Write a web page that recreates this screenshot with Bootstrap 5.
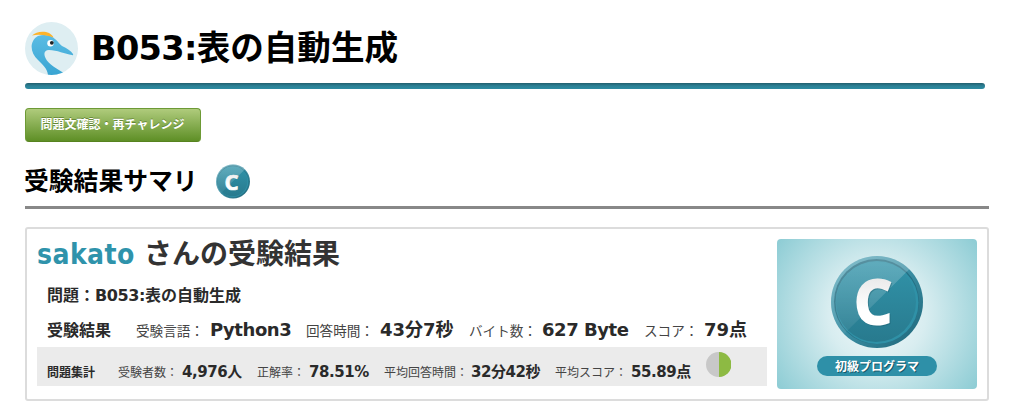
<!DOCTYPE html>
<html lang="ja">
<head>
  <meta charset="UTF-8">
  <meta name="viewport" content="width=device-width, initial-scale=1">
  <title>B053:表の自動生成</title>
  <link rel="stylesheet" href="https://cdn.jsdelivr.net/npm/bootstrap@5.3.2/dist/css/bootstrap.min.css">
  <style>
    body {
      width: 1011px;
      height: 410px;
      overflow: hidden;
      background: #fff;
      color: #2a2a2a;
      font-family: "DejaVu Sans", "Noto Sans CJK JP", sans-serif;
      white-space: nowrap;
    }
    svg { display: block; flex: none; }
    .page { padding: 22px 22px 0 25px; }

    /* page title */
    .title-row { height: 53px; }
    .title-text { font-size: 33.6px; line-height: 54px; color: #000; margin-left: 13px; }
    .title-text .latin { letter-spacing: -.7px; }
    .title-bar {
      width: 960px; height: 6px; margin-top: 8px; border-radius: 3px;
      background: linear-gradient(#225f6e, #2b8196 50%, #2d8ba1);
    }

    .btn-retry {
      width: 176px; height: 34px; margin-top: 19px; padding: 0 1px 0 0;
      border: 1px solid #6d9a35; border-bottom-color: #57831f; border-radius: 4px;
      background: linear-gradient(#afcb7c, #5e8f26);
      color: #fff; font-size: 12px; font-weight: 700; line-height: 32px;
      text-shadow: 0 -1px 0 rgba(50, 80, 10, .45);
    }

    /* summary heading */
    .summary-row { height: 67px; border-bottom: 3px solid #888; padding-bottom: 7px; }
    .summary-text { width: 191px; font-size: 24.8px; line-height: 34px; color: #000; text-indent: -1px; }

    /* result panel */
    .result-panel { height: 174px; margin-top: 18px; border: 2px solid #dcdcdc; border-radius: 3px; padding: 10px; }
    .result-main { width: 730px; }
    .user-line { height: 32px; font-size: 28px; line-height: 32px; color: #333; }
    .user-name { color: #2f93ab; width: 107px; font-family: "DejaVu Sans Condensed", sans-serif; letter-spacing: .45px; }
    .problem-line { height: 24px; margin: 13px 0 0 10px; font-size: 16px; line-height: 24px; }
    .problem-line .latin { letter-spacing: -.4px; }
    .score-line, .stat-line { display: grid; align-items: baseline; }
    .score-line {
      height: 27px; margin-top: 8px; padding-left: 10px; font-size: 16px; line-height: 27px;
      grid-template-columns: 89px 74px 96px 74px 89px 73px 102px 60px 70px;
    }
    .stat-line {
      height: 39px; margin-top: 4px; padding: 13px 0 0 10px; background: #ebebeb; font-size: 12px; line-height: 24px;
      grid-template-columns: 71px 64px 75px 52px 75px 87px 84px 76px 75px 25px;
    }
    .cap { color: #444; font-weight: 400; }
    .val { font-weight: 700; letter-spacing: -.45px; }
    .score-line .cap { font-size: 13.6px; }
    .score-line .val { font-size: 18px; }
    .stat-line .val { font-size: 15px; }
    .score-line .val-mixed { letter-spacing: 0; }
    .pie { margin-top: -8px; }
    .rank-card { width: 200px; height: 150px; border-radius: 4px; overflow: hidden; }
  </style>
</head>
<body>
  <div class="page">
    <div class="title-row d-flex">
      <svg width="53" height="53" viewBox="0 0 53 53">
        <defs>
          <clipPath id="birdClip"><circle cx="26.5" cy="26.5" r="26.5"/></clipPath>
          <linearGradient id="birdFill" x1="0" y1="0" x2="0" y2="1">
            <stop offset="0" stop-color="#5bbce4"/><stop offset="1" stop-color="#38a4d2"/>
          </linearGradient>
        </defs>
        <g clip-path="url(#birdClip)">
          <rect width="53" height="53" fill="#deeef2"/>
          <path d="M13 14 C19 12 26 13 30 17 C33 19 34 22 37 24 C42 26 46 29 48 32 Q48.500 33.500 47 33 C40 32 32 28 24 28 C19 28 18.500 32 20.500 36 C23 42 32 47 39 51 L38 54 L23 54 C23 47 18 43 13 38 C5 31 4 19 13 14Z" fill="url(#birdFill)"/>
          <path d="M7 13.500 C12 8.500 25 8 28.500 15.500 C21 13 14 12 7 13.500Z" fill="#fdb32b"/>
          <circle cx="25.500" cy="21.300" r="3.200" fill="#fff"/>
          <circle cx="26.800" cy="20.800" r="1.900" fill="#1d2226"/>
        </g>
      </svg>
      <h1 class="title-text fw-bold mb-0"><span class="latin">B053:</span>表の自動生成</h1>
    </div>
    <div class="title-bar"></div>

    <button type="button" class="btn btn-retry d-block">問題文確認・再チャレンジ</button>

    <div class="summary-row d-flex align-items-end">
      <h2 class="summary-text fw-bold mb-0">受験結果サマリ</h2>
      <svg width="34" height="35" viewBox="0 0 92 92">
        <use href="#medal"/>
      </svg>
    </div>

    <div class="result-panel d-flex">
      <div class="result-main">
        <div class="user-line d-flex align-items-baseline fw-bold">
          <span class="user-name">sakato</span><span>さんの受験結果</span>
        </div>
        <div class="problem-line fw-bold">問題：<span class="latin">B053:</span>表の自動生成</div>
        <div class="score-line">
          <b>受験結果</b>
          <span class="cap">受験言語：</span><span class="val">Python3</span>
          <span class="cap">回答時間：</span><span class="val val-mixed">43分7秒</span>
          <span class="cap">バイト数：</span><span class="val">627 Byte</span>
          <span class="cap">スコア：</span><span class="val val-mixed">79点</span>
        </div>
        <div class="stat-line">
          <b>問題集計</b>
          <span class="cap">受験者数：</span><span class="val">4,976人</span>
          <span class="cap">正解率：</span><span class="val">78.51%</span>
          <span class="cap">平均回答時間：</span><span class="val">32分42秒</span>
          <span class="cap">平均スコア：</span><span class="val">55.89点</span>
          <svg class="pie align-self-start" width="25" height="25" viewBox="0 0 25 25">
            <circle cx="12.500" cy="12.500" r="12.500" fill="#c8c8c8"/>
            <path d="M13 0 A12.500 12.500 0 0 1 13 25Z" fill="#8dba43"/>
          </svg>
        </div>
      </div>

      <div class="rank-card ms-auto">
        <svg width="200" height="150" viewBox="0 0 200 150">
          <defs>
            <radialGradient id="cardGlow" gradientUnits="userSpaceOnUse" cx="100" cy="75" r="122">
              <stop offset="0" stop-color="#f4fafb"/><stop offset=".4" stop-color="#d8edf0"/><stop offset="1" stop-color="#8fcdd5"/>
            </radialGradient>
            <linearGradient id="medalRim" x1="0" y1="0" x2="1" y2="1">
              <stop offset="0" stop-color="#62aebf"/><stop offset=".5" stop-color="#3a8ea3"/><stop offset="1" stop-color="#1d6477"/>
            </linearGradient>
            <linearGradient id="medalFace" x1="0" y1="0" x2="0" y2="1">
              <stop offset="0" stop-color="#3193a9"/><stop offset="1" stop-color="#287a8e"/>
            </linearGradient>
            <linearGradient id="medalShine" x1="0" y1="0" x2="0" y2="1">
              <stop offset="0" stop-color="#fff" stop-opacity=".24"/><stop offset="1" stop-color="#fff" stop-opacity=".02"/>
            </linearGradient>
            <linearGradient id="letterFill" x1="0" y1="0" x2="0" y2="1">
              <stop offset="0" stop-color="#dedede"/><stop offset=".6" stop-color="#fff"/>
            </linearGradient>
            <clipPath id="medalClip"><circle cx="46" cy="46" r="46"/></clipPath>
            <g id="medal">
              <circle cx="46" cy="46" r="46" fill="url(#medalRim)"/>
              <circle cx="45.500" cy="45.500" r="42.500" fill="#256f83"/>
              <circle cx="46" cy="46.500" r="41.500" fill="#2f91a7"/>
              <circle cx="45" cy="46" r="40" fill="url(#medalFace)"/>
              <path d="M0 0H92L76.500 15 L16 75 L0 92Z" fill="url(#medalShine)" clip-path="url(#medalClip)"/>
              <g font-family="Open Sans, sans-serif" font-size="60" font-weight="700" stroke-width="2">
                <text x="24" y="69" fill="#185565" stroke="#185565" opacity=".35">C</text>
                <text x="23" y="68" fill="url(#letterFill)" stroke="url(#letterFill)">C</text>
              </g>
            </g>
          </defs>
          <rect width="200" height="150" fill="url(#cardGlow)"/>
          <use href="#medal" x="54" y="17"/>
          <rect x="40" y="117" width="120" height="20" rx="10" fill="#2e90a8"/>
          <g font-family="Noto Sans CJK JP, sans-serif" font-size="12" font-weight="700" text-anchor="middle">
            <text x="101" y="133" fill="#17596a">初級プログラマ</text>
            <text x="100" y="132" fill="#fff">初級プログラマ</text>
          </g>
        </svg>
      </div>
    </div>
  </div>
  <script src="https://cdn.jsdelivr.net/npm/bootstrap@5.3.2/dist/js/bootstrap.bundle.min.js"></script>
</body>
</html>
